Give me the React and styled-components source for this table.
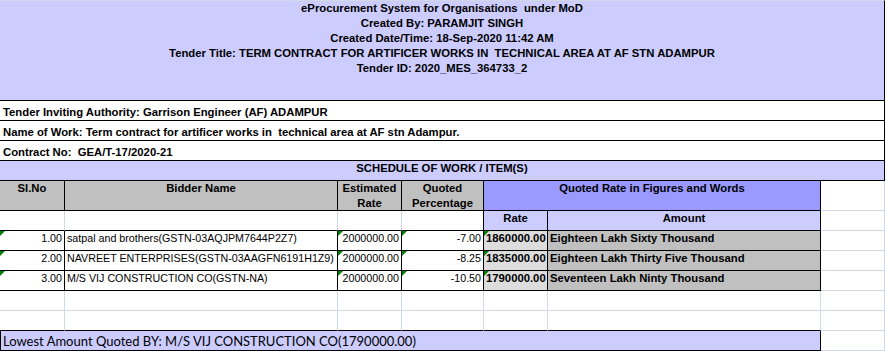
import React from "react";
import styled, { createGlobalStyle, css } from "styled-components";

const GRID = "#d0d7e5";
const INK = "#000";
const LAVENDER = "#ccccff";
const PERIWINKLE = "#9999ff";
const GRAY = "#c0c0c0";
const LIGHTGRAY = "#dddddd";

const GlobalStyle = createGlobalStyle`
  html, body { margin: 0; padding: 0; background: #fff; }
  body { font-family: "Liberation Sans", Arial, sans-serif; color: #000; }
`;

const Sheet = styled.div`
  display: grid;
  grid-template-columns: 65px 273px 64px 82px 64px 273px 64px;
  grid-template-rows: 101px repeat(4, 20px) 30px repeat(7, 20px);
  width: 885px;
  font-family: "Liberation Sans", Arial, sans-serif;
`;

const boldText = css`
  font-size: 11.3px;
  font-weight: 700;
`;

const plainText = css`
  font-size: 10.7px;
  font-weight: 400;
`;

const TitleBlock = styled.div`
  grid-column: 1 / -1;
  box-sizing: border-box;
  background: ${LAVENDER};
  border-top: 1px solid ${GRID};
  border-right: 1px solid ${INK};
  border-bottom: 1px solid ${INK};
  display: flex;
  flex-direction: column;
  align-items: center;
  ${boldText};
  line-height: 15px;
  white-space: pre;
`;

const InfoRow = styled.div`
  grid-column: 1 / -1;
  box-sizing: border-box;
  border-right: 1px solid ${INK};
  border-bottom: 1px solid ${INK};
  padding: 4px 3px 0;
  ${boldText};
  line-height: 15px;
  white-space: pre;
`;

const Band = styled.div`
  grid-column: 1 / -1;
  box-sizing: border-box;
  background: ${LAVENDER};
  border-right: 1px solid ${INK};
  border-bottom: 1px solid ${INK};
  text-align: center;
  ${boldText};
  line-height: 15px;
`;

const Cell = styled.div`
  position: relative;
  box-sizing: border-box;
  grid-column: span ${(p) => p.$span || 1};
  background: ${(p) => p.$bg || "#fff"};
  border-right: 1px solid ${(p) => p.$right || GRID};
  border-bottom: 1px solid ${(p) => p.$bottom || GRID};
  padding: 0 2px;
  line-height: 15px;
  white-space: nowrap;
  overflow: hidden;
  text-align: ${(p) => p.$align || "left"};
  ${(p) => (p.$bold ? boldText : plainText)};
  ${(p) =>
    p.$flag &&
    css`
      &::before {
        content: "";
        position: absolute;
        top: 0;
        left: 0;
        width: 0;
        height: 0;
        border-top: 5px solid #008000;
        border-right: 5px solid transparent;
      }
    `}
`;

const HeadCell = styled(Cell).attrs({ $bold: true, $align: "center", $right: INK, $bottom: INK })``;

const Footer = styled.div`
  grid-column: span 6;
  box-sizing: border-box;
  background: ${LAVENDER};
  border-left: 1px solid ${INK};
  border-right: 1px solid ${INK};
  border-bottom: 1px solid ${INK};
  padding: 1px 2px 0;
  font-family: Lato, "Open Sans", sans-serif;
  font-size: 13px;
  line-height: 19px;
  white-space: nowrap;
`;

const titleLines = [
  "eProcurement System for Organisations  under MoD",
  "Created By: PARAMJIT SINGH",
  "Created Date/Time: 18-Sep-2020 11:42 AM",
  "Tender Title: TERM CONTRACT FOR ARTIFICER WORKS IN  TECHNICAL AREA AT AF STN ADAMPUR",
  "Tender ID: 2020_MES_364733_2",
];

const infoLines = [
  "Tender Inviting Authority: Garrison Engineer (AF) ADAMPUR",
  "Name of Work: Term contract for artificer works in  technical area at AF stn Adampur.",
  "Contract No:  GEA/T-17/2020-21",
];

const bids = [
  {
    sl: "1.00",
    name: "satpal and brothers(GSTN-03AQJPM7644P2Z7)",
    est: "2000000.00",
    pct: "-7.00",
    rate: "1860000.00",
    words: "Eighteen Lakh Sixty Thousand",
  },
  {
    sl: "2.00",
    name: "NAVREET ENTERPRISES(GSTN-03AAGFN6191H1Z9)",
    est: "2000000.00",
    pct: "-8.25",
    rate: "1835000.00",
    words: "Eighteen Lakh Thirty Five Thousand",
  },
  {
    sl: "3.00",
    name: "M/S VIJ CONSTRUCTION CO(GSTN-NA)",
    est: "2000000.00",
    pct: "-10.50",
    rate: "1790000.00",
    words: "Seventeen Lakh Ninty Thousand",
  },
];

export default function App() {
  return (
    <>
      <GlobalStyle />
      <Sheet>
        <TitleBlock>
          {titleLines.map((t) => (
            <div key={t}>{t}</div>
          ))}
        </TitleBlock>

        {infoLines.map((t) => (
          <InfoRow key={t}>{t}</InfoRow>
        ))}

        <Band>SCHEDULE OF WORK / ITEM(S)</Band>

        <HeadCell $bg={GRAY}>Sl.No</HeadCell>
        <HeadCell $bg={GRAY}>Bidder Name</HeadCell>
        <HeadCell $bg={GRAY}>
          Estimated
          <br />
          Rate
        </HeadCell>
        <HeadCell $bg={GRAY}>
          Quoted
          <br />
          Percentage
        </HeadCell>
        <HeadCell $bg={PERIWINKLE} $span={2}>
          Quoted Rate in Figures and Words
        </HeadCell>
        <Cell />

        <Cell $bottom={INK} />
        <Cell $bottom={INK} />
        <Cell $bottom={INK} />
        <Cell $bottom={INK} $right={INK} />
        <HeadCell $bg={LAVENDER}>Rate</HeadCell>
        <HeadCell $bg={LAVENDER}>Amount</HeadCell>
        <Cell />

        {bids.map((b) => (
          <React.Fragment key={b.sl}>
            <Cell $right={INK} $bottom={INK} $align="right" $flag>
              {b.sl}
            </Cell>
            <Cell $right={INK} $bottom={INK}>
              {b.name}
            </Cell>
            <Cell $right={INK} $bottom={INK} $align="right" $flag>
              {b.est}
            </Cell>
            <Cell $right={INK} $bottom={INK} $align="right" $flag>
              {b.pct}
            </Cell>
            <Cell $right={INK} $bottom={INK} $align="right" $bg={LIGHTGRAY} $bold $flag>
              {b.rate}
            </Cell>
            <Cell $right={INK} $bottom={INK} $bg={GRAY} $bold>
              {b.words}
            </Cell>
            <Cell />
          </React.Fragment>
        ))}

        {[0, 1, 2, 3, 4, 5, 6].map((i) => (
          <Cell key={`e1-${i}`} />
        ))}
        {[0, 1, 2, 3, 4, 5].map((i) => (
          <Cell key={`e2-${i}`} $bottom={INK} />
        ))}
        <Cell />

        <Footer>Lowest Amount Quoted BY: M/S VIJ CONSTRUCTION CO(1790000.00)</Footer>
        <Cell />
      </Sheet>
    </>
  );
}
